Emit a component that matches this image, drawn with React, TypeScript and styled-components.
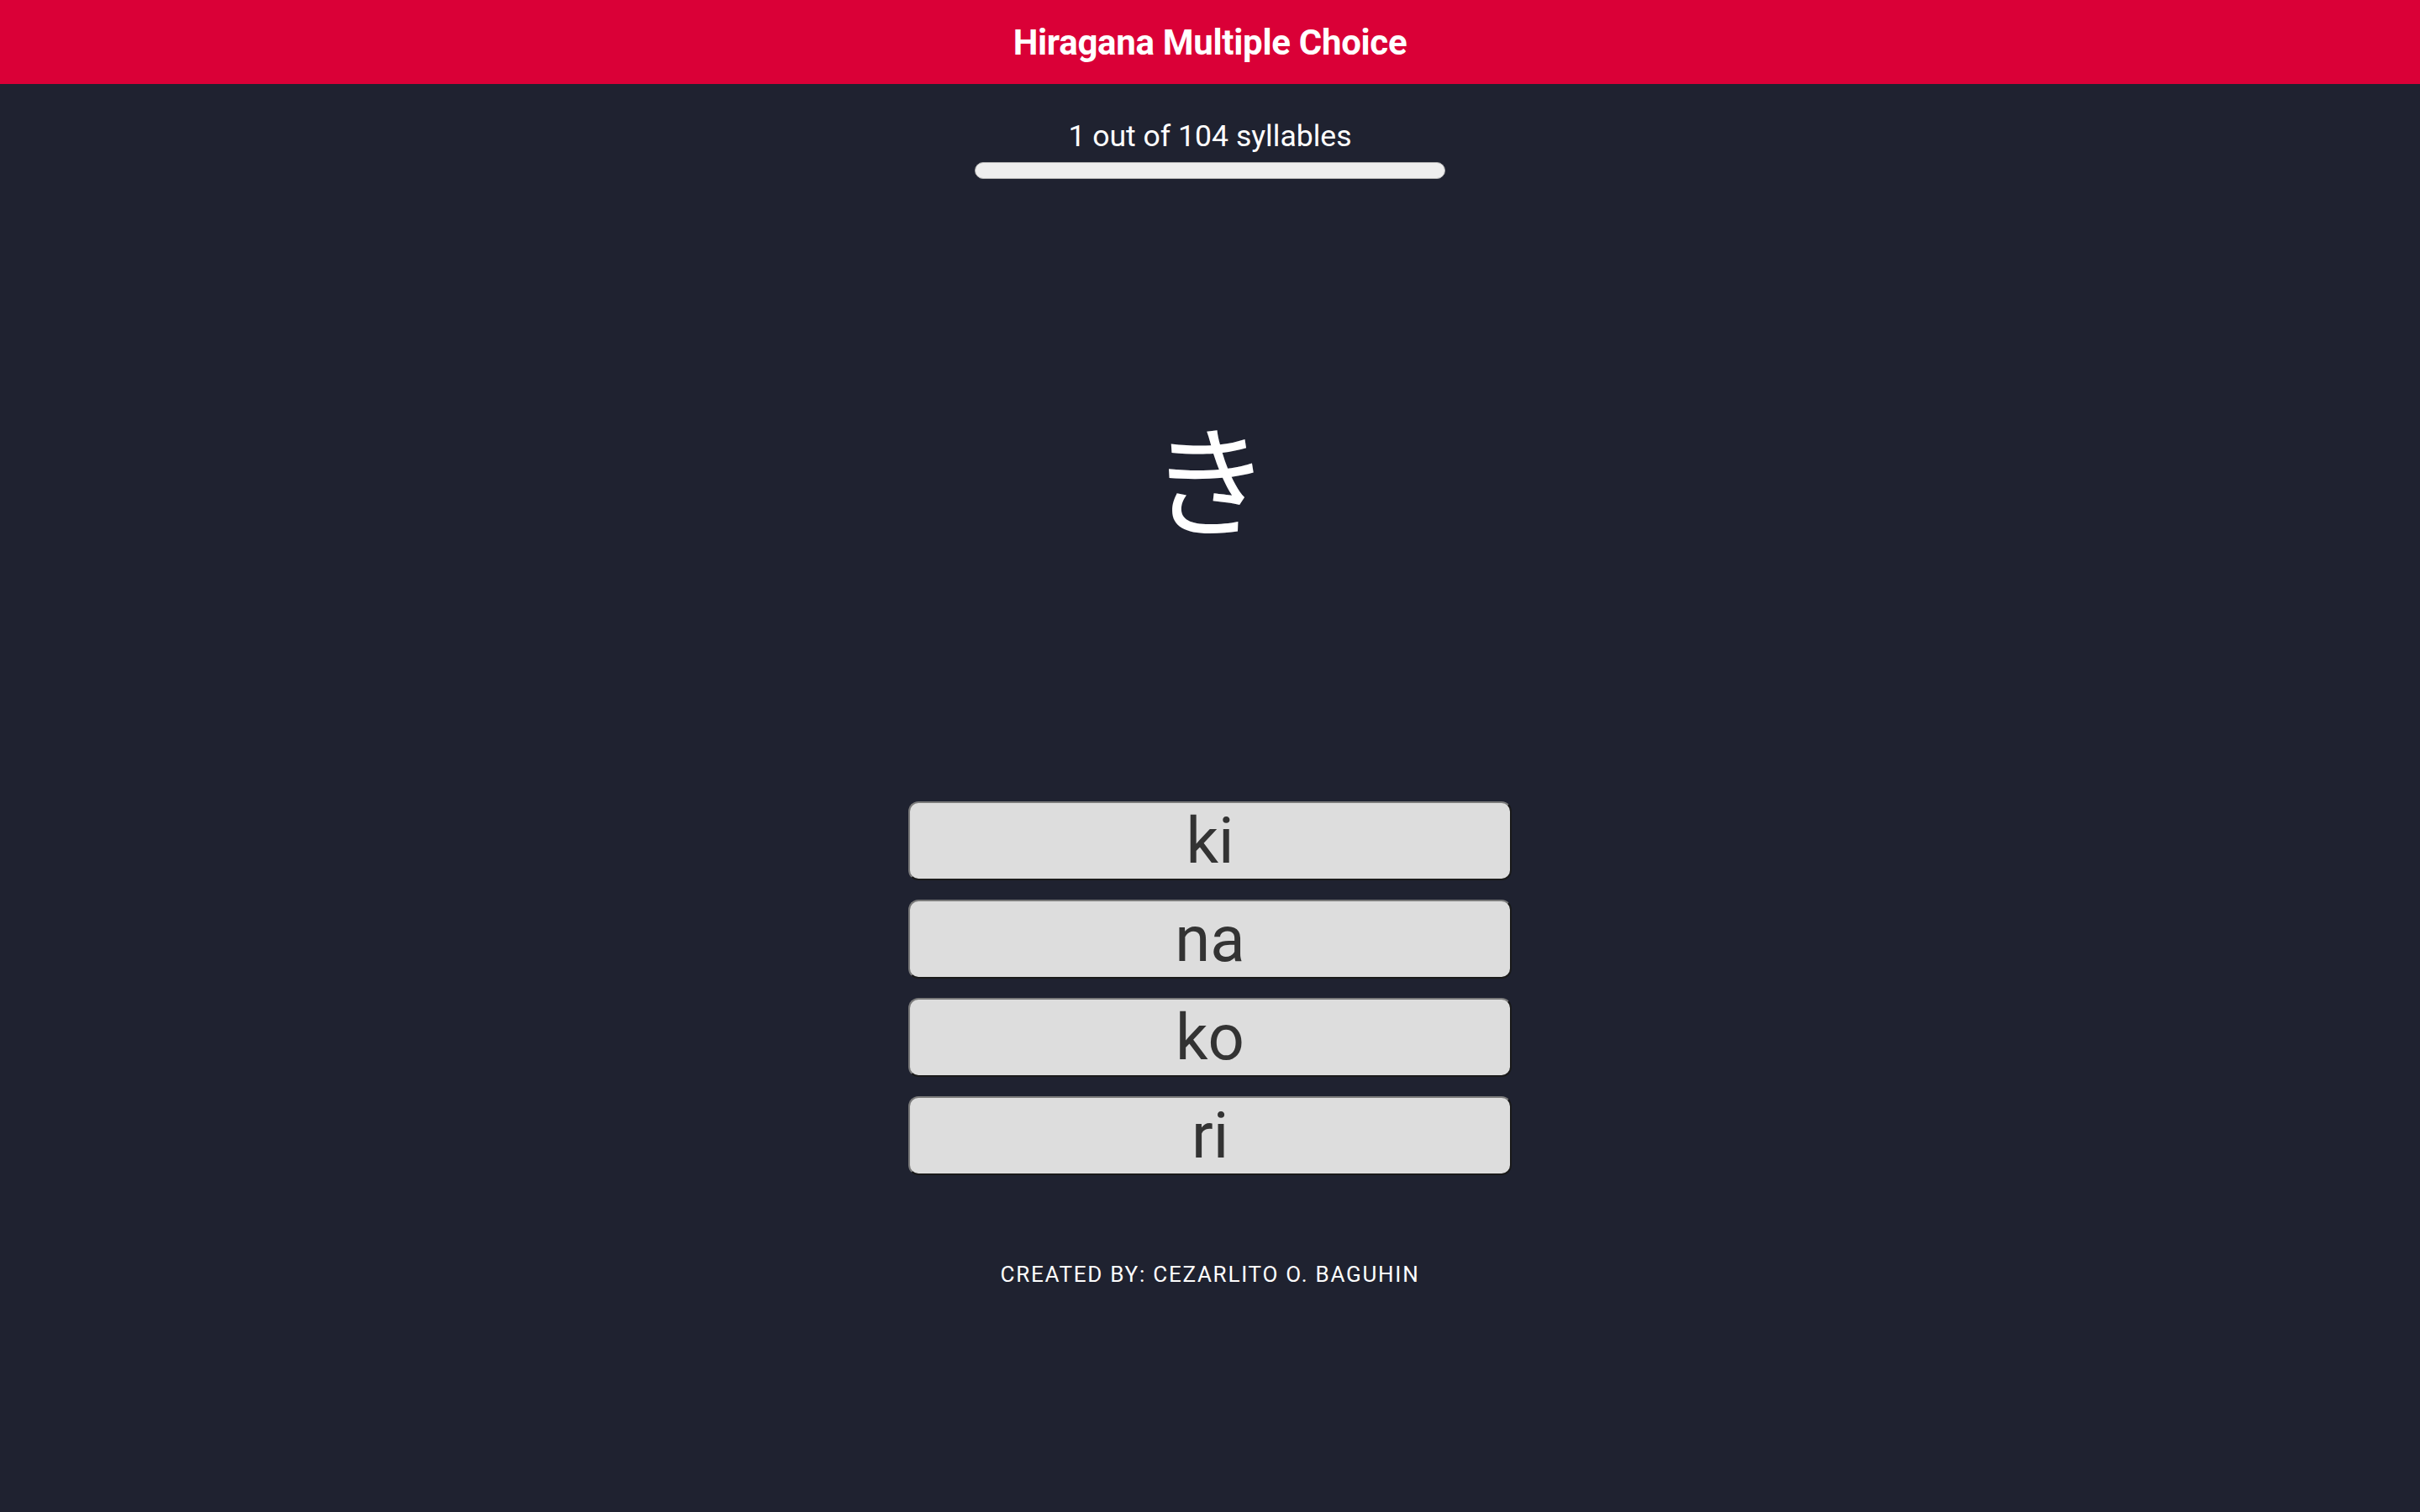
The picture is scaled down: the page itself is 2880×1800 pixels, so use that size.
import React from 'react';
import styled, { createGlobalStyle } from 'styled-components';

const GlobalStyle = createGlobalStyle`
  html, body {
    margin: 0;
    padding: 0;
    background-color: #1f2230;
    font-family: Roboto, "Noto Sans CJK JP", sans-serif;
  }
  #root {
    min-height: 100vh;
  }
`;

const Page = styled.div`
  display: flex;
  flex-direction: column;
  min-height: 100vh;
  background-color: #1f2230;
`;

const Header = styled.header`
  height: 100px;
  background-color: #da0037;
  display: flex;
  align-items: center;
  justify-content: center;
`;

const Title = styled.h1`
  margin: 0;
  color: #fff;
  font-family: Roboto, sans-serif;
  font-weight: 700;
  font-size: 42px;
  letter-spacing: -0.3px;
`;

const Main = styled.main`
  display: flex;
  flex-direction: column;
  align-items: center;
`;

const Counter = styled.div`
  margin-top: 41px;
  color: #fff;
  font-size: 35.6px;
  line-height: 42px;
`;

const ProgressTrack = styled.div`
  box-sizing: border-box;
  margin-top: 10px;
  width: 560px;
  height: 20px;
  background-color: #eeeeee;
  border: 1px solid #b5b5b5;
  border-radius: 10px;
  overflow: hidden;
`;

const ProgressFill = styled.div`
  height: 100%;
  background-color: #eeeeee;
`;

const KanaStage = styled.div`
  box-sizing: border-box;
  height: 741px;
  padding-bottom: 38px;
  display: flex;
  align-items: center;
  justify-content: center;
`;

const Kana = styled.div`
  color: #fff;
  font-family: "Noto Sans CJK JP", sans-serif;
  font-size: 144px;
  font-weight: 400;
  line-height: normal;
`;

const Choices = styled.div`
  display: flex;
  flex-direction: column;
  gap: 23px;
`;

const ChoiceButton = styled.button`
  box-sizing: border-box;
  width: 718px;
  height: 94px;
  padding: 0;
  margin: 0;
  background-color: #dddddd;
  color: #333;
  font-family: Roboto, sans-serif;
  font-size: 76px;
  line-height: normal;
  border-width: 2px;
  border-style: solid;
  border-color: #7a7a7a #1a1a1a #1a1a1a #7a7a7a;
  border-radius: 12px;
  cursor: pointer;
  display: flex;
  align-items: center;
  justify-content: center;
`;

const Footer = styled.footer`
  margin-top: 103px;
  color: #fff;
  font-size: 26px;
  font-weight: 400;
  letter-spacing: 1.75px;
  text-transform: uppercase;
  line-height: normal;
`;

const choices = ['ki', 'na', 'ko', 'ri'];
const total = 104;
const current = 1;

export default function App() {
  return (
    <Page>
      <GlobalStyle />
      <Header>
        <Title>Hiragana Multiple Choice</Title>
      </Header>
      <Main>
        <Counter>
          {current} out of {total} syllables
        </Counter>
        <ProgressTrack>
          <ProgressFill style={{ width: `${((current - 1) / total) * 100}%` }} />
        </ProgressTrack>
        <KanaStage>
          <Kana>き</Kana>
        </KanaStage>
        <Choices>
          {choices.map((c) => (
            <ChoiceButton key={c}>{c}</ChoiceButton>
          ))}
        </Choices>
        <Footer>Created by: Cezarlito O. Baguhin</Footer>
      </Main>
    </Page>
  );
}
